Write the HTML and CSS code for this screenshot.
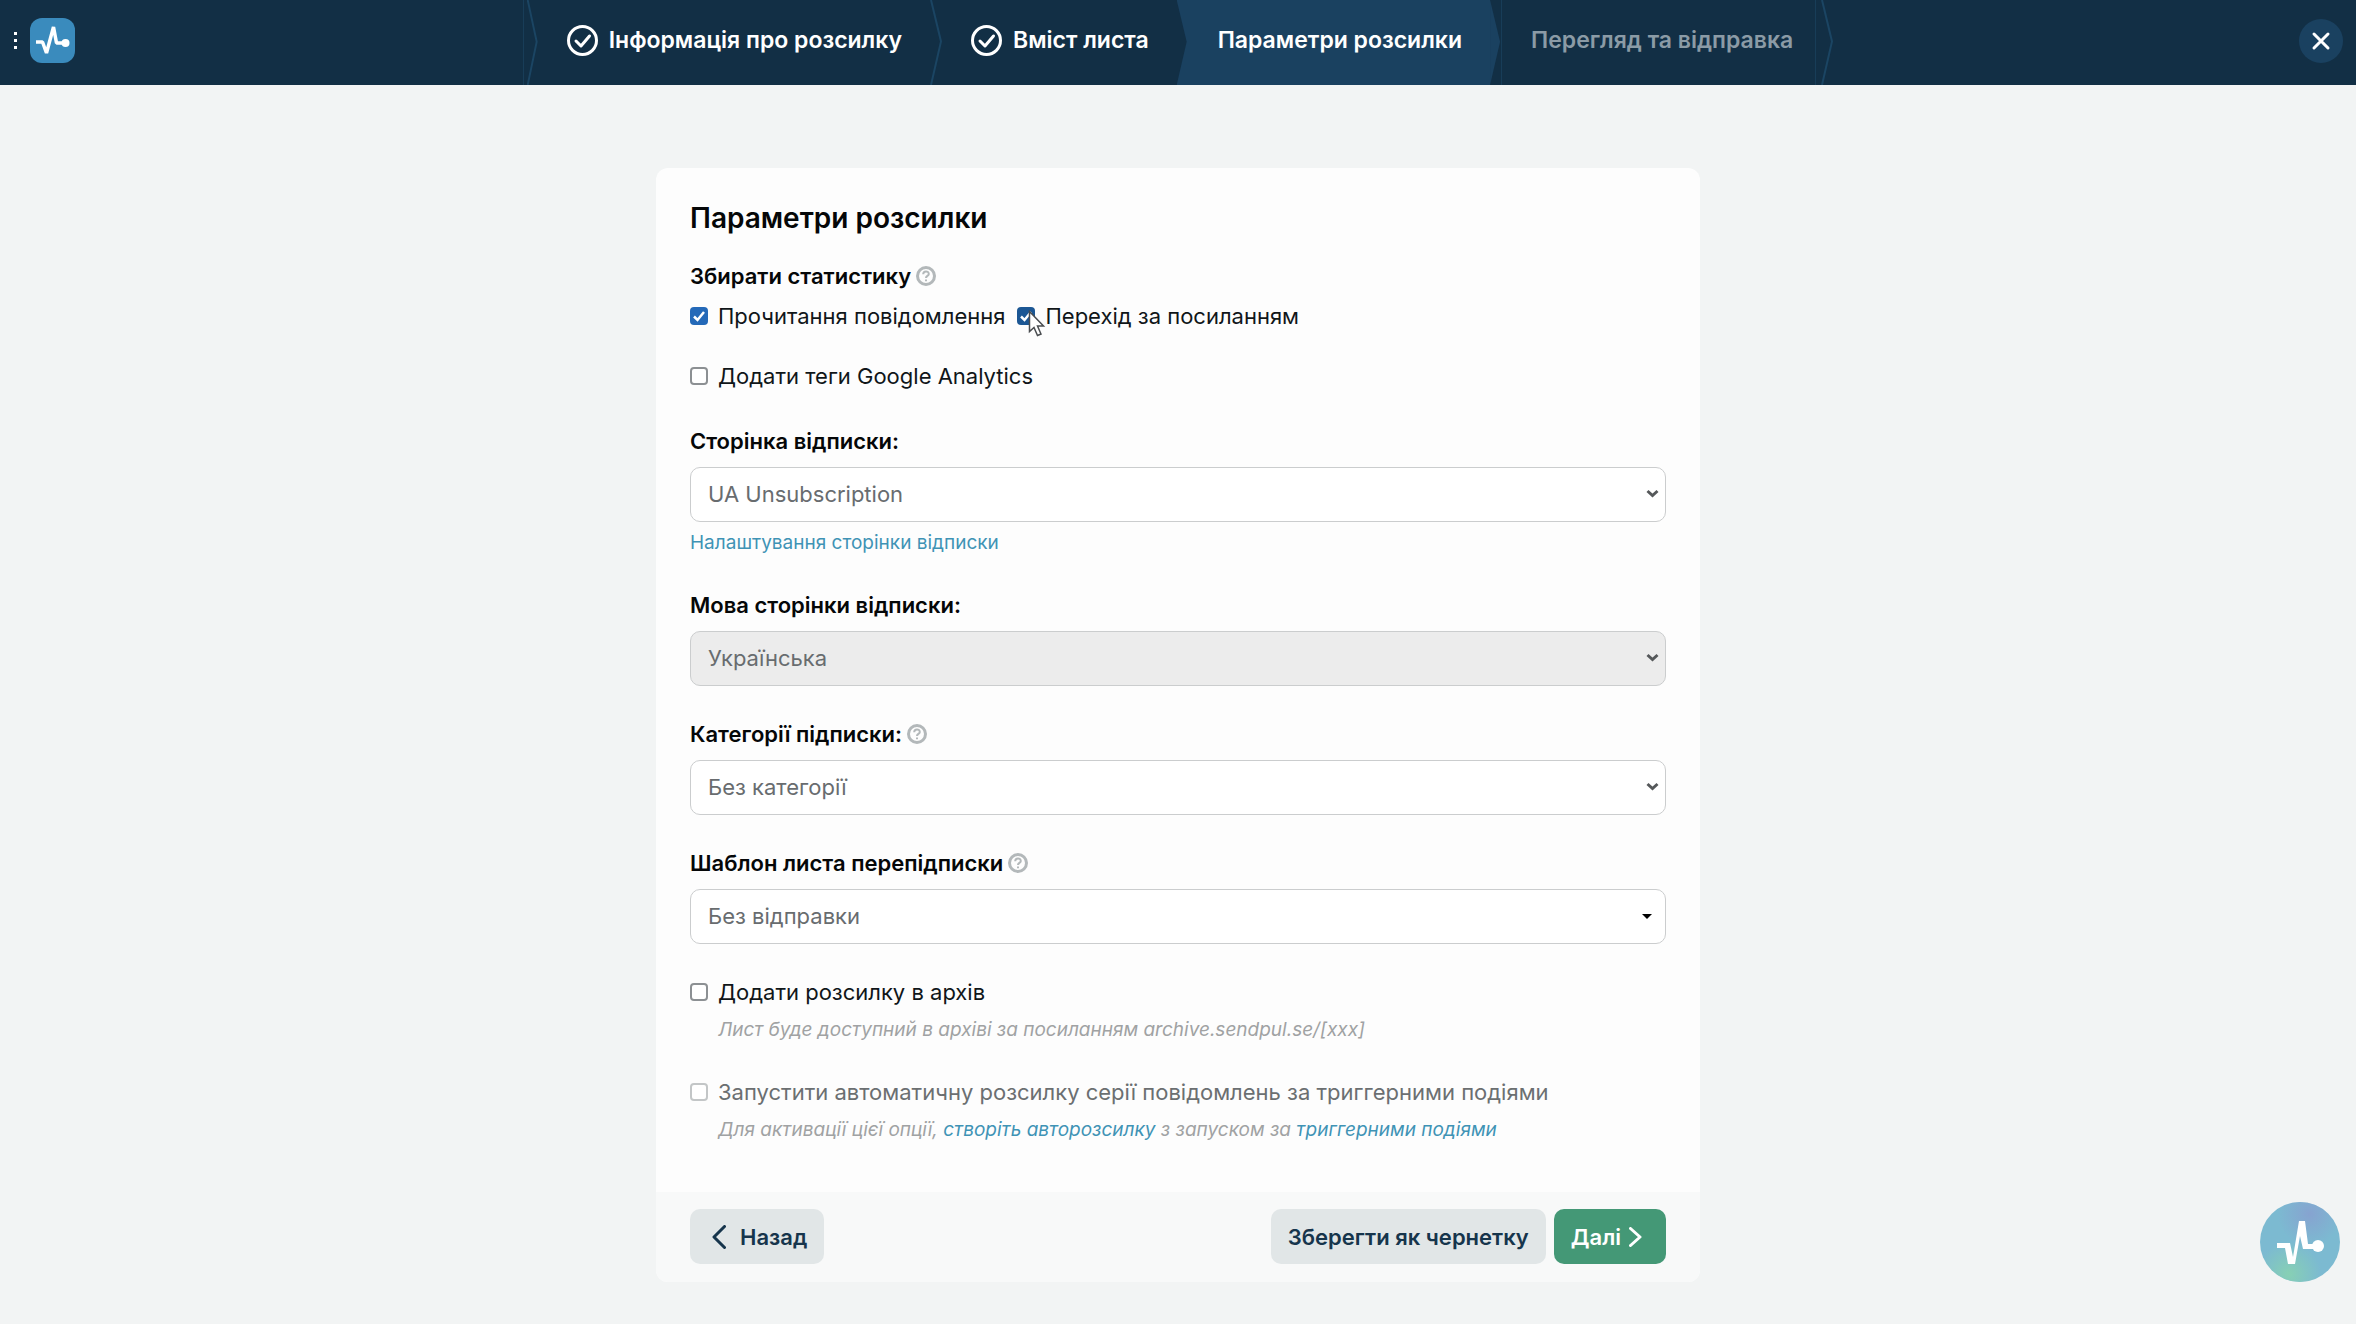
FILE: index.html
```
<!DOCTYPE html>
<html lang="uk">
<head>
    <meta charset="UTF-8">
    <meta name="viewport" content="width=device-width, initial-scale=1.0">
    <title>Параметри розсилки</title>
    <link rel="stylesheet" href="styles.css">
</head>
<body>
    <header class="topbar">
        <div class="brand">
            <button type="button" class="menu-btn" aria-label="Меню"><span></span><span></span><span></span></button>
            <a href="#" class="logo" aria-label="SendPulse">
                <svg width="45" height="45" viewBox="0 0 45 45">
                    <rect width="45" height="45" rx="12" fill="#3a8bbd"/>
                    <path d="M6 24h6.500l4 11L23.500 9l3 16H35" fill="none" stroke="#fff" stroke-width="3.500" stroke-linejoin="bevel"/>
                    <circle cx="35.500" cy="25" r="4" fill="#fff"/>
                </svg>
            </a>
        </div>

        <nav class="steps">
            <a href="#" class="step step-first">
                <svg class="step-check" width="31" height="31" viewBox="0 0 31 31"><circle cx="15.500" cy="15.500" r="14"/><path d="M9 16l5 5 8.500-10"/></svg>
                Інформація про розсилку
                <svg class="step-edge" viewBox="0 0 12 84" preserveAspectRatio="none"><path d="M1 0l10 41L1 84"/></svg>
            </a>
            <a href="#" class="step">
                <svg class="step-check" width="31" height="31" viewBox="0 0 31 31"><circle cx="15.500" cy="15.500" r="14"/><path d="M9 16l5 5 8.500-10"/></svg>
                Вміст листа
            </a>
            <a href="#" class="step active">Параметри розсилки</a>
            <span class="step disabled">
                Перегляд та відправка
                <svg class="step-edge" viewBox="0 0 12 84" preserveAspectRatio="none"><path d="M1 0l10 41L1 84"/></svg>
            </span>
        </nav>

        <div class="topbar-right">
            <button type="button" class="close-btn" aria-label="Закрити">
                <svg width="20" height="20" viewBox="0 0 20 20"><path d="M3 3l14 14M17 3L3 17"/></svg>
            </button>
        </div>
    </header>

    <form class="card">
        <div class="card-body">
            <h1>Параметри розсилки</h1>

            <fieldset class="stats">
                <legend class="label">Збирати статистику
                    <svg class="help" width="20" height="20" viewBox="0 0 20 20"><circle cx="10" cy="10" r="8.500"/><path d="M7.200 8.200c0-3.800 5.600-3.600 5.600-.3 0 2-2.800 2-2.800 4M10 13.500v1.800"/></svg>
                </legend>
                <div class="check-row">
                    <label class="check"><input type="checkbox" checked>Прочитання повідомлення</label>
                    <label class="check">
                        <input type="checkbox" class="hovered" checked>Перехід за посиланням
                        <svg class="cursor" width="18" height="28" viewBox="0 0 18 28"><path d="M1.500 1.500v20l4.500-4 3.500 8 3.500-1.500-3.500-8h6z"/></svg>
                    </label>
                </div>
            </fieldset>

            <label class="check ga"><input type="checkbox">Додати теги Google Analytics</label>

            <div class="field">
                <label class="label" for="page">Сторінка відписки:</label>
                <div class="select">
                    <select id="page"><option>UA Unsubscription</option></select>
                    <svg class="arrow" width="13" height="9" viewBox="0 0 13 9"><path d="M1.500 2l5 4.500 5-4.500"/></svg>
                </div>
                <a href="#" class="field-link">Налаштування сторінки відписки</a>
            </div>

            <div class="field">
                <label class="label" for="lang">Мова сторінки відписки:</label>
                <div class="select">
                    <select id="lang" disabled><option>Українська</option></select>
                    <svg class="arrow" width="13" height="9" viewBox="0 0 13 9"><path d="M1.500 2l5 4.500 5-4.500"/></svg>
                </div>
            </div>

            <div class="field">
                <label class="label" for="category">Категорії підписки:
                    <svg class="help" width="20" height="20" viewBox="0 0 20 20"><circle cx="10" cy="10" r="8.500"/><path d="M7.200 8.200c0-3.800 5.600-3.600 5.600-.3 0 2-2.800 2-2.800 4M10 13.500v1.800"/></svg>
                </label>
                <div class="select">
                    <select id="category"><option>Без категорії</option></select>
                    <svg class="arrow" width="13" height="9" viewBox="0 0 13 9"><path d="M1.500 2l5 4.500 5-4.500"/></svg>
                </div>
            </div>

            <div class="field">
                <label class="label" for="template">Шаблон листа перепідписки
                    <svg class="help" width="20" height="20" viewBox="0 0 20 20"><circle cx="10" cy="10" r="8.500"/><path d="M7.200 8.200c0-3.800 5.600-3.600 5.600-.3 0 2-2.800 2-2.800 4M10 13.500v1.800"/></svg>
                </label>
                <div class="select">
                    <select id="template"><option>Без відправки</option></select>
                    <svg class="caret" width="10" height="5" viewBox="0 0 10 5"><path d="M0 0h10L5 5z"/></svg>
                </div>
            </div>

            <div class="option">
                <label class="check"><input type="checkbox">Додати розсилку в архів</label>
                <p class="hint">Лист буде доступний в архіві за посиланням archive.sendpul.se/[xxx]</p>
            </div>

            <div class="option">
                <label class="check muted"><input type="checkbox" disabled>Запустити автоматичну розсилку серії повідомлень за триггерними подіями</label>
                <p class="hint">Для активації цієї опції, <a href="#">створіть авторозсилку</a> з запуском за <a href="#">триггерними подіями</a></p>
            </div>
        </div>

        <div class="card-footer">
            <button type="button" class="btn btn-back">
                <svg width="14" height="24" viewBox="0 0 14 24"><path d="M12.500 1.500L2 12l10.500 10.500"/></svg>
                Назад
            </button>
            <div class="actions">
                <button type="button" class="btn">Зберегти як чернетку</button>
                <button type="submit" class="btn btn-next">
                    Далі
                    <svg width="13" height="20" viewBox="0 0 13 20"><path d="M1.500 1.500L11 10l-9.500 8.500"/></svg>
                </button>
            </div>
        </div>
    </form>

    <button type="button" class="chat-btn" aria-label="Чат">
        <svg width="80" height="80" viewBox="0 0 80 80">
            <defs>
                <radialGradient id="violet" cx="0.62" cy="0.15" r="0.4">
                    <stop offset="0" stop-color="#86a3d0"/>
                    <stop offset="1" stop-color="#86a3d0" stop-opacity="0"/>
                </radialGradient>
                <radialGradient id="green" cx="0.36" cy="0.9" r="0.4">
                    <stop offset="0" stop-color="#87d0b4"/>
                    <stop offset="1" stop-color="#87d0b4" stop-opacity="0"/>
                </radialGradient>
            </defs>
            <circle cx="40" cy="40" r="40" fill="#7cbad1"/>
            <circle cx="40" cy="40" r="40" fill="url(#violet)"/>
            <circle cx="40" cy="40" r="40" fill="url(#green)"/>
            <path d="M17 41h13l3 14 6-36h6l3 23h10v5H43l-3-13-5 28h-7l-3-16h-8z" fill="#fff"/>
            <circle cx="58" cy="44" r="6" fill="#fff"/>
        </svg>
    </button>
</body>
</html>
```
FILE: styles.css
```
/* CSS styles */
* {
    box-sizing: border-box;
}

body {
    margin: 0;
    min-height: 100vh;
    font-family: Inter, "Noto Sans", sans-serif;
    font-size: 22px;
    line-height: 28px;
    color: #101619;
    background-color: #f2f4f4;
}

a {
    color: #3f93b5;
    text-decoration: none;
}

button {
    font: inherit;
    border: none;
    cursor: pointer;
}

svg {
    fill: none;
    flex: none;
}

/* Top bar */
.topbar {
    display: grid;
    grid-template-columns: 1fr auto 1fr;
    height: 85px;
    background-color: #122f45;
}

.brand {
    display: flex;
    align-items: center;
    gap: 11px;
    padding: 0 0 4px 12px;
}

.menu-btn {
    display: flex;
    flex-direction: column;
    gap: 4px;
    padding: 2px;
    background: none;
}

.menu-btn span {
    width: 3px;
    height: 3px;
    background-color: #fff;
}

.logo {
    display: flex;
}

.steps {
    display: flex;
    padding-right: 12px; /* room for the last arrow */
}

.step {
    position: relative;
    display: flex;
    align-items: center;
    gap: 11px;
    padding: 0 28px 5px 41px;
    font-size: 23px;
    font-weight: 600;
    color: #fff;
}

.step-first {
    border-left: 1px solid #183d58;
    padding-left: 43px;
}

.step-first::before {
    content: "";
    position: absolute;
    left: 3px;
    top: 0;
    bottom: 0;
    width: 11px;
    background-color: #1b4563;
    clip-path: polygon(0 0, 2px 0, 100% 49%, 2px 100%, 0 100%, 9px 49%);
}

.step-check {
    stroke: #fff;
    stroke-width: 3;
    stroke-linecap: round;
    stroke-linejoin: round;
}

.step-edge {
    position: absolute;
    left: 100%;
    top: 0;
    width: 12px;
    height: 100%;
    stroke: #1b4563;
    stroke-width: 2;
}

.active {
    background-color: #1a4160;
}

/* notch on the left and point on the right of the current step */
.active::before,
.active::after {
    content: "";
    position: absolute;
    top: 0;
    bottom: 0;
    width: 10px;
}

.active::before {
    left: 0;
    background-color: #122f45;
    clip-path: polygon(0 0, 100% 49%, 0 100%);
}

.active::after {
    left: 100%;
    background-color: #1a4160;
    clip-path: polygon(0 0, 100% 49%, 0 100%);
}

.disabled {
    color: #8b9ba6;
}

.disabled::before,
.disabled::after {
    content: "";
    position: absolute;
    top: 0;
    bottom: 0;
    width: 1px;
    background-color: #183d58;
}

.disabled::before {
    left: 11px;
}

.disabled::after {
    right: 5px;
}

.topbar-right {
    display: flex;
    justify-content: flex-end;
    align-items: center;
    padding: 0 13px 4px 0;
}

.close-btn {
    display: flex;
    align-items: center;
    justify-content: center;
    width: 44px;
    height: 44px;
    padding: 0;
    border-radius: 50%;
    background-color: #1a4160;
    stroke: #fff;
    stroke-width: 3;
    stroke-linecap: round;
}

/* Card */
.card {
    width: calc(100% - 40px);
    max-width: 1044px;
    margin: 83px auto 42px;
    border-radius: 12px;
    background-color: #fdfdfd;
    overflow: hidden;
}

.card-body {
    padding: 32px 34px 50px;
}

h1 {
    margin: 0 0 26px;
    font-size: 28px;
    line-height: 36px;
    font-weight: 600;
    color: #050708;
}

.label {
    display: flex;
    align-items: center;
    gap: 5px;
    margin-bottom: 12px;
    padding: 0;
    font-weight: 600;
    color: #050708;
}

.help {
    stroke: #b3b8ba;
    stroke-width: 2;
}

.help circle {
    stroke-width: 3;
}

.stats {
    margin: 0;
    padding: 0;
    border: none;
}

.check-row {
    display: flex;
    flex-wrap: wrap;
    gap: 12px;
}

.check {
    position: relative;
    display: flex;
    align-items: center;
    gap: 10px;
}

.ga {
    margin: 32px 0 37px;
}

.check input {
    appearance: none;
    flex: none;
    width: 18px;
    height: 18px;
    margin: 0;
    border: 2px solid #8c9093;
    border-radius: 4px;
    background-color: #fff;
}

.check input:checked {
    border: none;
    background: #2469b8 url('data:image/svg+xml,<svg xmlns="http://www.w3.org/2000/svg" viewBox="0 0 18 18"><path d="M4 9.500l3.500 3.500L14 5" fill="none" stroke="white" stroke-width="2.500"/></svg>');
}

.check input.hovered {
    background-color: #1c5794;
}

.check input:disabled {
    border-color: #c3c6c7;
}

.muted {
    color: #6b6f71;
}

.cursor {
    position: absolute;
    left: 11px;
    top: 8px;
    fill: #fff;
    stroke: #4a4d50;
    stroke-width: 1.5;
}

.field {
    margin-bottom: 34px;
}

.select {
    position: relative;
}

select {
    appearance: none;
    display: block;
    width: 100%;
    height: 55px;
    padding: 0 40px 2px 17px;
    border: 1px solid #cbcdce;
    border-radius: 10px;
    background-color: #fff;
    font: inherit;
    color: #686c6f;
}

select:disabled {
    background-color: #ececec;
    opacity: 1;
}

.arrow {
    position: absolute;
    right: 7px;
    top: 22px;
    stroke: #55585a;
    stroke-width: 3;
}

.caret {
    position: absolute;
    right: 14px;
    top: 25px;
    fill: #000;
}

.field-link {
    display: block;
    margin: 9px 0 36px;
    font-size: 19px;
    line-height: 24px;
}

.option + .option {
    margin-top: 36px;
}

.hint {
    margin: 12px 0 0 28px;
    font-size: 19px;
    line-height: 24px;
    font-style: italic;
    color: #a0a2a3;
}

.card-footer {
    display: flex;
    justify-content: space-between;
    padding: 17px 34px 18px;
    background-color: #f8f9f9;
}

.actions {
    display: flex;
    gap: 8px;
}

.btn {
    display: flex;
    align-items: center;
    height: 55px;
    padding: 0 17px;
    border-radius: 10px;
    background-color: #e1e6e7;
    font-weight: 600;
    color: #16354c;
    stroke: #16354c;
    stroke-width: 3;
    stroke-linecap: round;
    stroke-linejoin: round;
}

.btn-back {
    gap: 14px;
    padding-left: 22px;
}

.btn-next {
    gap: 8px;
    padding-right: 24px;
    background-color: #449876;
    color: #fff;
    stroke: #fff;
}

/* Chat bubble */
.chat-btn {
    position: fixed;
    right: 16px;
    bottom: 42px;
    display: flex;
    padding: 0;
    border-radius: 50%;
    background: none;
}
```
